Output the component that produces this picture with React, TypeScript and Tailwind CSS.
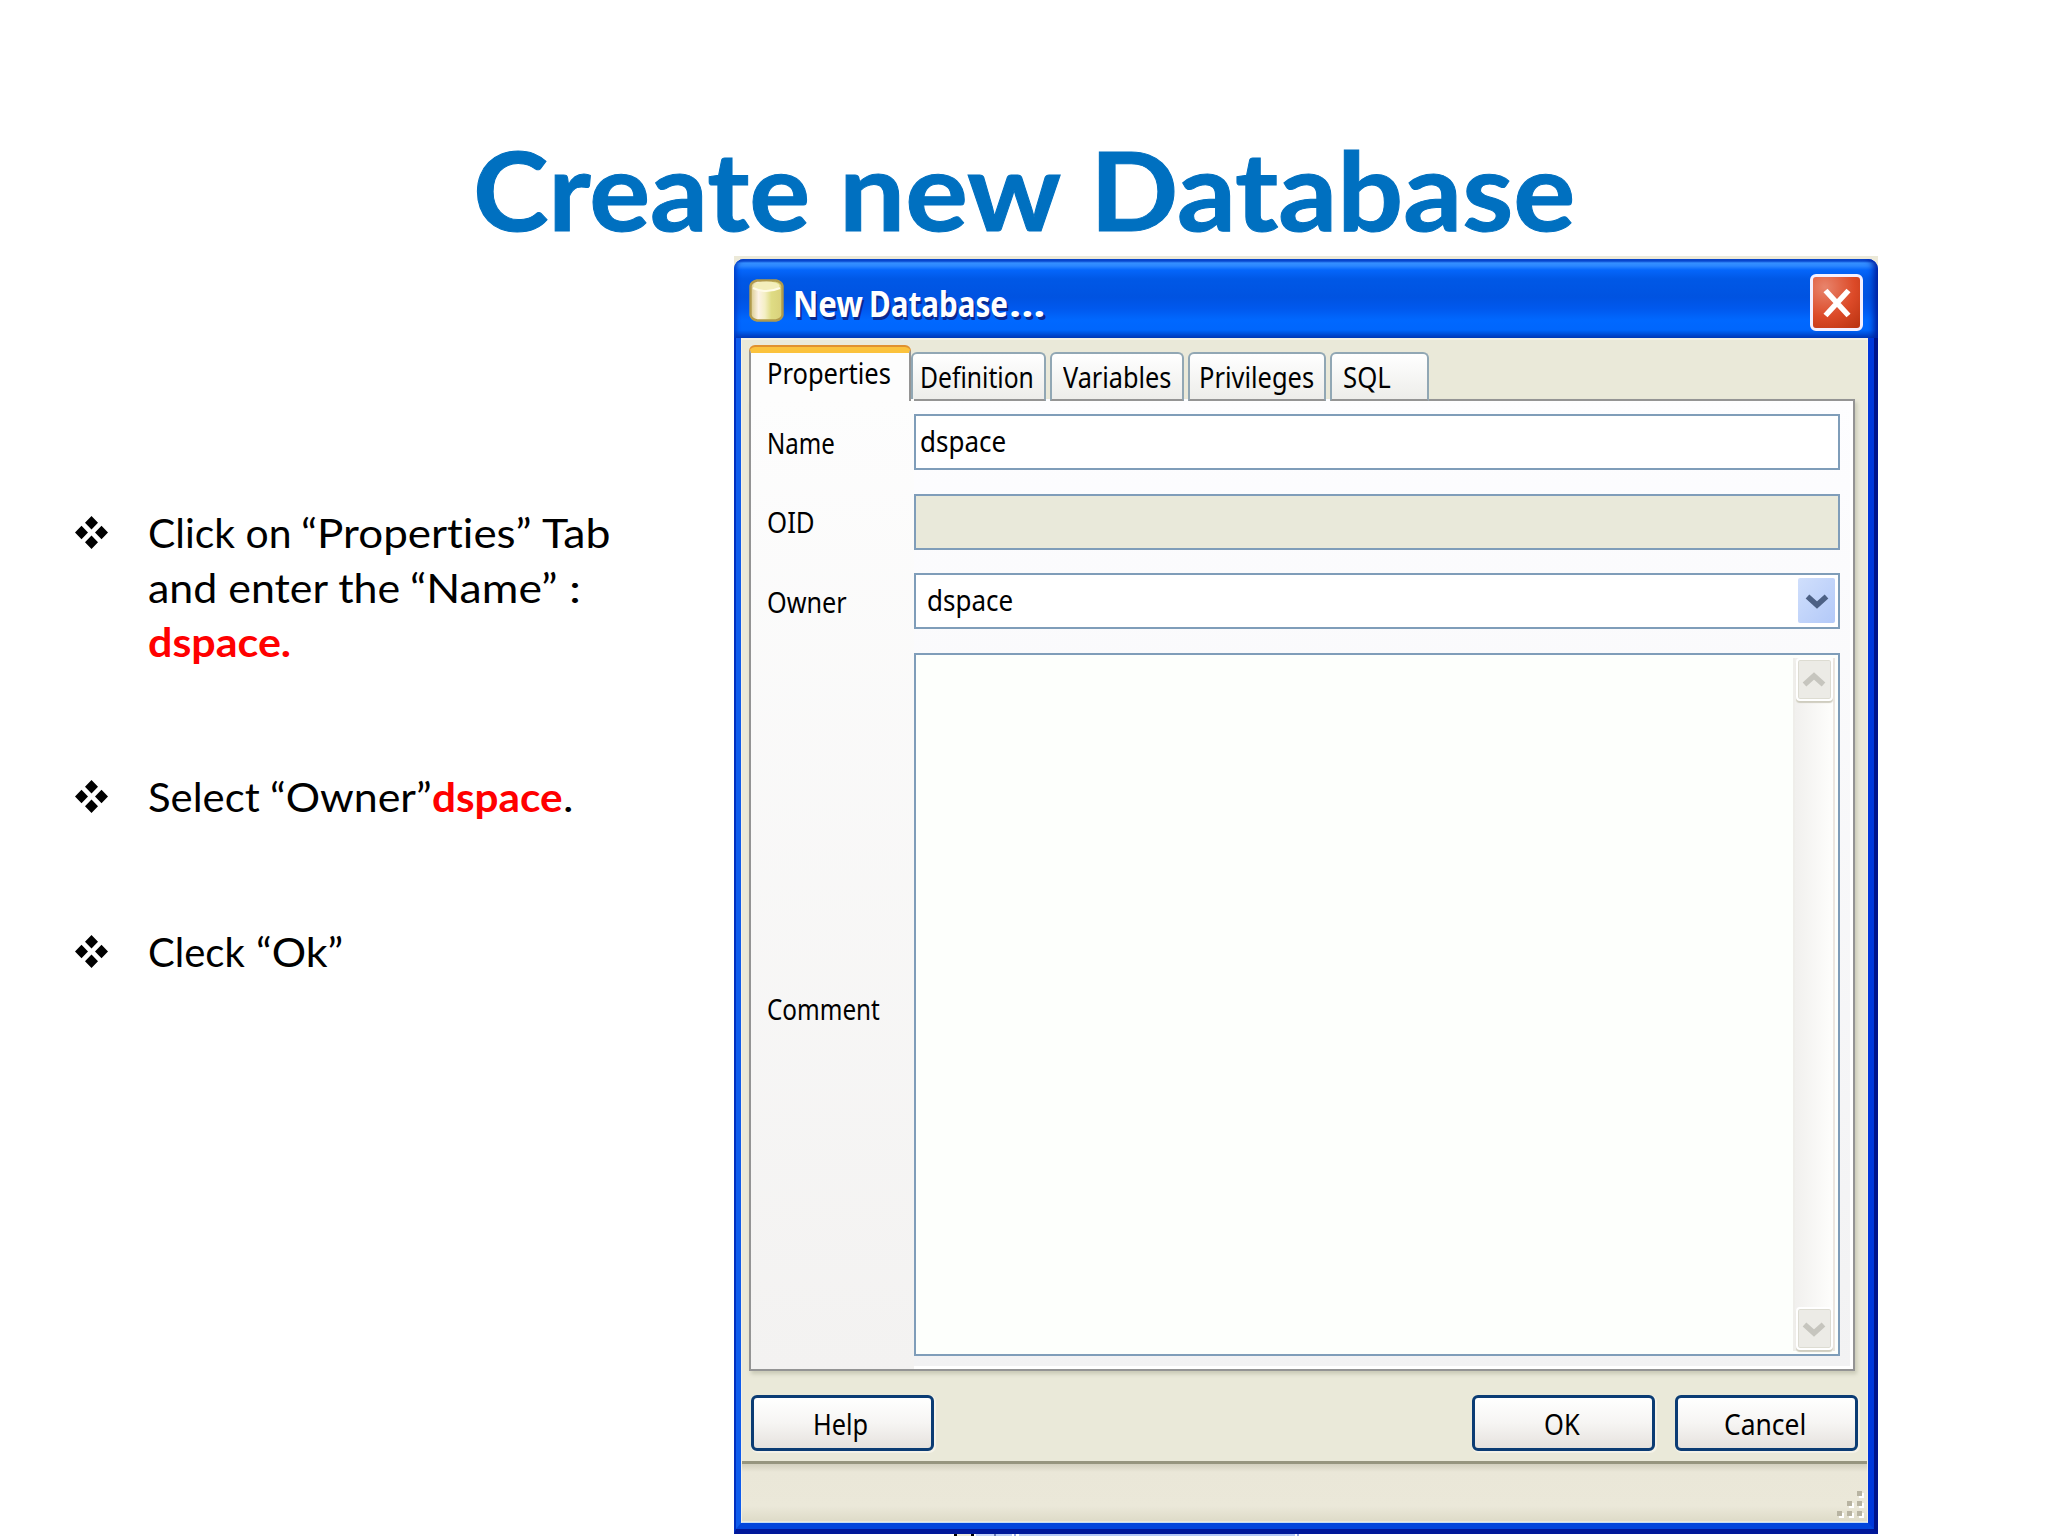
import React, { useLayoutEffect, useRef, useState } from 'react'
import clsx from 'clsx'

const ui = "font-['Noto_Sans',sans-serif] text-[29px] leading-[40px] text-black"
const slide = "font-['Lato',sans-serif] text-[40px] leading-[54.5px] text-black [font-variant-ligatures:none]"

const tabs = [
  { label: 'Definition', tab: 'w-[135px] pl-[7px]', width: 114 },
  { label: 'Variables', tab: 'w-[134px] ml-[4px] pl-[11px]', width: 108 },
  { label: 'Privileges', tab: 'w-[138px] ml-[4px] pl-[9px]', width: 115 },
  { label: 'SQL', tab: 'w-[99px] ml-[4px] pl-[11px]', width: 48 },
]

// one line of text, squeezed or stretched to the given width
const Fit = ({ width, className, children }: { width: number; className?: string; children: React.ReactNode }) => {
  const ref = useRef<HTMLSpanElement>(null)
  const [scale, setScale] = useState(1)

  useLayoutEffect(() => {
    if (ref.current) setScale(width / ref.current.offsetWidth)
  }, [width])

  return (
    <span className={clsx('block whitespace-nowrap', className)} style={{ width }}>
      <span ref={ref} className='inline-block origin-left' style={{ transform: `scaleX(${scale})` }}>{children}</span>
    </span>
  )
}

const Bullet = () => (
  <svg viewBox='0 0 33 33' className='mt-[10px] w-[33px] h-[33px] shrink-0'>
    <path d='M16.500 0l6.500 6.700-6.500 6.700L10 6.700zM16.500 19.600l6.500 6.700-6.500 6.700-6.500-6.700zM6.500 9.800l6.500 6.700-6.500 6.700L0 16.500zM26.500 9.800l6.500 6.700-6.500 6.700-6.500-6.700z' fill='#000' />
  </svg>
)

const DatabaseIcon = () => (
  <svg viewBox='0 0 35 43' className='w-[35px] h-[43px]'>
    <defs>
      <linearGradient id='can' x1='0' x2='1' y1='0' y2='0'>
        <stop offset='0' stopColor='#d9c98a' />
        <stop offset='0.25' stopColor='#fdf3e6' />
        <stop offset='0.45' stopColor='#f4efc4' />
        <stop offset='0.65' stopColor='#dfdc84' />
        <stop offset='1' stopColor='#d8d07a' />
      </linearGradient>
    </defs>
    <path d='M1.500 7Q2 3 8 1.500h19Q33 3 33.500 7v29q-.5 4-6.500 5.500H8Q2 40 1.500 36z' fill='url(#can)' stroke='#b09a4c' strokeWidth='2.400' />
    <ellipse cx='17.500' cy='7' rx='13' ry='4.500' fill='#f3eebb' />
    <path d='M4 9q13 6 27 0' fill='none' stroke='#fffbe6' strokeWidth='2' />
  </svg>
)

const Chevron = ({ up, color }: { up?: boolean; color: string }) => (
  <svg viewBox='0 0 24 16' className={clsx('w-[24px] h-[16px]', up && 'rotate-180')}>
    <path d='M2.500 3.500L12 12l9.500-8.500' fill='none' stroke={color} strokeWidth='5.500' />
  </svg>
)

const ScrollButton = ({ up }: { up?: boolean }) => (
  <div className='flex items-center justify-center w-[37px] h-[43px] rounded-[4px] border-2 border-white bg-[#ecebe6] shadow-[0_2px_1px_#cfcdbf,inset_0_0_0_1px_#dddcd2]'>
    <Chevron up={up} color='#c6c5be' />
  </div>
)

const Button = ({ label, width, className }: { label: string; width: number; className?: string }) => (
  <button className={clsx('flex justify-center items-center h-[56px] rounded-[6px] border-[3px] border-[#0b3c74] bg-linear-to-b from-white via-[#f6f5f3] to-[#e6e2de] shadow-[1px_1px_0_1px_#f4f2e8] pr-[4px] pt-[1px]', className)}>
    <Fit width={width}>{label}</Fit>
  </button>
)

const TitleBar = () => (
  <div className='flex h-[79px] rounded-t-[10px] bg-[linear-gradient(to_bottom,#0a4ad0_0px,#0a4ad0_2px,#3590ff_4px,#2a86ff_7px,#0566fb_11px,#0058e6_20px,#0053e1_38px,#0059ee_50px,#0068ff_61px,#0066fc_71px,#0049d0_76px,#003cb8_79px)] shadow-[inset_5px_0_5px_-3px_#0038c0,inset_-8px_0_6px_-4px_#001f9e]'>
    <div className='mt-[20px] ml-[15px]'><DatabaseIcon /></div>
    <div className="flex mt-[21px] ml-[9px] font-['Noto_Sans',sans-serif] font-bold text-[36px] leading-[48px] text-white [text-shadow:2px_3px_0_#0a2a90]">
      <Fit width={70}>New</Fit>
      <Fit width={139} className='ml-[6px]'>Database</Fit>
      <Fit width={36} className='ml-[1px]'>...</Fit>
    </div>
    <div className='flex justify-center items-center mt-[15px] ml-auto mr-[15px] w-[53px] h-[57px] rounded-[6px] border-[3px] border-[#f4f0ff] bg-[radial-gradient(circle_at_25%_20%,#e8846c,#dc4a28_55%,#b83210)]'>
      <svg viewBox='0 0 28 30' className='w-[28px] h-[30px]'>
        <path d='M2.500 2.500l23 25M25.500 2.500l-23 25' stroke='#fff' strokeWidth='5.500' />
      </svg>
    </div>
  </div>
)

const PropertiesPanel = () => (
  <div className='flex h-[972px] -mt-[2px] ml-[7px] w-[1106px] border-2 border-t-0 border-[#949494] bg-linear-to-b from-[#fdfdff] to-[#f2f2f3] shadow-[inset_-3px_-3px_0_#fff,2px_3px_4px_#c9c9b6]'>
    <div className='w-[163px] pl-[16px] bg-linear-to-b from-[#fdfdfd] to-[#f3f2f1]'>
      <Fit width={68} className='mt-[24px]'>Name</Fit>
      <Fit width={48} className='mt-[39px]'>OID</Fit>
      <Fit width={80} className='mt-[40px]'>Owner</Fit>
      <Fit width={113} className='mt-[367px]'>Comment</Fit>
    </div>
    <div className='w-[926px]'>
      <div className='mt-[15px] h-[56px] border-[2.500px] border-[#7f9db9] bg-white pl-[4px] pt-[5px]'>
        <Fit width={86}>dspace</Fit>
      </div>
      <div className='mt-[24px] h-[56px] border-[2.500px] border-[#7f9db9] bg-[#e9e9da]'></div>
      <div className='flex justify-between mt-[23px] h-[56px] border-[2.500px] border-[#7f9db9] bg-white pl-[11px] pt-[5px] pr-[3px]'>
        <Fit width={86}>dspace</Fit>
        <div className='flex items-center justify-center -mt-[2px] w-[37px] h-[45px] rounded-[2px] bg-linear-to-br from-[#d0dffc] to-[#b3c9f8]'>
          <Chevron color='#4d6185' />
        </div>
      </div>
      <div className='flex justify-end mt-[24px] h-[703px] border-[2.500px] border-[#7f9db9] bg-[#fdfffc] p-[3px]'>
        <div className='flex flex-col items-center justify-between w-[42px] pb-[1px] border-x-2 border-l-[#efeeea] border-r-[#ece6e0] bg-linear-to-r from-[#f1f0ee] to-[#fefefc]'>
          <ScrollButton up />
          <ScrollButton />
        </div>
      </div>
    </div>
  </div>
)

const Dialog = () => (
  <div className='w-[1144px] h-[1278px] shrink-0 bg-[#ece9d8] pt-[3px]'>
    <div className='h-[1275px] bg-[#0038dc] rounded-t-[10px]'>
      <TitleBar />
      <div className='h-[1196px] border-l-2 border-r-[4px] border-b-[5px] border-l-[#0030c0] border-r-[#00148c] border-b-[#00189a]'>
        <div className='h-[1191px] border-l-[5px] border-r-[6px] border-b-[6px] border-l-[#0f5cec] border-r-[#0038dc] border-b-[#0246dc]'>
          <div className={clsx('h-[1185px] border border-t-2 border-[#f4f0e4] border-b-[#c4dcf4] bg-[#eae9d9]', ui)}>
            <div className='flex items-end h-[61px] pl-[7px]'>
              <div className='relative z-10 w-[162px] h-[54px] border-x-2 border-x-[#949494] rounded-t-[6px] border-t-[6px] border-t-[#fbc23c] bg-[#fdfdfd] shadow-[0_-2px_0_#e0912f] pl-[16px]'>
                <Fit width={124}>Properties</Fit>
              </div>
              {tabs.map((tab) => (
                <div key={tab.label} className={clsx('h-[49px] border-2 border-l-[#91a7b4] border-r-[#91a7b4] border-t-[#91a7b4] border-b-[#949494] rounded-t-[6px] bg-linear-to-b from-white to-[#ededea] pt-[3px]', tab.tab)}>
                  <Fit width={tab.width}>{tab.label}</Fit>
                </div>
              ))}
              <div className='w-[425px] h-[2px] bg-[#949494]'></div>
            </div>
            <PropertiesPanel />
            <div className='flex mt-[24px] pl-[9px]'>
              <Button label='Help' width={55} className='w-[183px]' />
              <Button label='OK' width={36} className='w-[183px] ml-[538px]' />
              <Button label='Cancel' width={82} className='w-[183px] ml-[20px]' />
            </div>
            <div className='flex justify-end items-end mt-[10px] h-[60px] border-t-[3px] border-[#96957f] bg-[linear-gradient(to_bottom,#d2cfbe_0px,#eae7d8_8px,#ebe8d9_42px,#dedbc8_57px)] pr-[3px] pb-[3px]'>
              <svg viewBox='0 0 28 28' className='w-[28px] h-[28px]'>
                <path d='M23 3h5v5h-5zM13 13h5v5h-5zM23 13h5v5h-5zM3 23h5v5H3zM13 23h5v5h-5zM23 23h5v5h-5z' fill='#fff' />
                <path d='M21 1h5v5h-5zM11 11h5v5h-5zM21 11h5v5h-5zM1 21h5v5H1zM11 21h5v5h-5zM21 21h5v5h-5z' fill='#b8b4a2' />
              </svg>
            </div>
          </div>
        </div>
      </div>
    </div>
  </div>
)

export default function App() {
  return (
    <div className='w-[2048px] h-[1536px] overflow-hidden bg-white'>
      <div className="flex h-[256px] pl-[473px] pt-[123px] font-['Lato',sans-serif] font-bold text-[110px] leading-[130px] text-[#0070c0] [-webkit-text-stroke:1px_#0070c0]">
        <Fit width={337}>Create</Fit>
        <Fit width={222} className='ml-[29px]'>new</Fit>
        <Fit width={485} className='ml-[29px]'>Database</Fit>
      </div>
      <div className='flex'>
        <ul className={clsx('w-[734px] pl-[75px] pt-[250px]', slide)}>
          <li className='flex'>
            <Bullet />
            <div className='ml-[40px]'>
              <div className='flex gap-[10px]'>
                <Fit width={143}>Click on</Fit>
                <Fit width={231}>“Properties”</Fit>
                <Fit width={68}>Tab</Fit>
              </div>
              <div className='flex gap-[10px]'>
                <Fit width={252}>and enter the</Fit>
                <Fit width={147}>“Name”</Fit>
                <Fit width={12} className='ml-[2px]'>:</Fit>
              </div>
              <Fit width={143} className='font-bold text-[#ff0000]'>dspace.</Fit>
            </div>
          </li>
          <li className='flex mt-[100px]'>
            <Bullet />
            <Fit width={112} className='ml-[40px]'>Select</Fit>
            <Fit width={162} className='ml-[10px]'>“Owner”</Fit>
            <Fit width={131} className='font-bold text-[#ff0000]'>dspace</Fit>
            <Fit width={10}>.</Fit>
          </li>
          <li className='flex mt-[101px]'>
            <Bullet />
            <Fit width={97} className='ml-[40px]'>Cleck</Fit>
            <Fit width={87} className='ml-[11px]'>“Ok”</Fit>
          </li>
        </ul>
        <Dialog />
      </div>
      {/* top edge of the window behind the dialog */}
      <div className='flex h-[2px] pl-[954px]'>
        <div className='w-[20px] border-x-[3px] border-black bg-[#ece9d8]'></div>
        <div className='ml-[2px] w-[18px] bg-[#c4d4fa]'></div>
        <div className='w-[18px] border-l-2 border-[#6c7cb4] bg-[#b8ccf8]'></div>
        <div className='ml-[2px] w-[2px] bg-[#98a8e8]'></div>
        <div className='ml-[3px] w-[276px] bg-[#b4c8f6]'></div>
        <div className='ml-[2px] w-[2px] bg-[#98a8e8]'></div>
      </div>
    </div>
  )
}
